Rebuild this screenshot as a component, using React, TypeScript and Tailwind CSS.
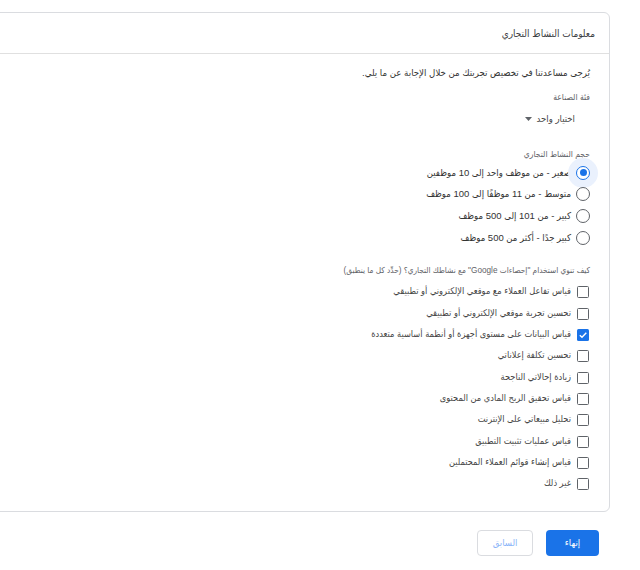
import React from "react";

const radios = [
  "صغير - من موظف واحد إلى 10 موظفين",
  "متوسط - من 11 موظفًا إلى 100 موظف",
  "كبير - من 101 إلى 500 موظف",
  "كبير جدًا - أكثر من 500 موظف",
];

const checks = [
  "قياس تفاعل العملاء مع موقعي الإلكتروني أو تطبيقي",
  "تحسين تجربة موقعي الإلكتروني أو تطبيقي",
  "قياس البيانات على مستوى أجهزة أو أنظمة أساسية متعددة",
  "تحسين تكلفة إعلاناتي",
  "زيادة إحالاتي الناجحة",
  "قياس تحقيق الربح المادي من المحتوى",
  "تحليل مبيعاتي على الإنترنت",
  "قياس عمليات تثبيت التطبيق",
  "قياس إنشاء قوائم العملاء المحتملين",
  "غير ذلك",
];

export default function App() {
  return (
    <div
      dir="rtl"
      className="w-[640px] h-[570px] overflow-hidden bg-white"
      style={{ fontFamily: '"Liberation Sans", "DejaVu Sans Condensed", "DejaVu Sans", Arial, sans-serif' }}
    >
      <div className="mt-[12px] mr-[30px] ml-[-12px] border border-[#dadce0] rounded-[6px] bg-white">
        <div className="h-[41px] flex items-center pr-[14px] border-b border-[#e0e0e0]">
          <span className="text-[10px] text-[#3c4043]">معلومات النشاط التجاري</span>
        </div>
        <div className="pr-[19px] pt-[11px] pb-[16px]">
          <div className="text-[9.6px] leading-[16px] text-[#333333]">
            يُرجى مساعدتنا في تخصيص تجربتك من خلال الإجابة عن ما يلي.
          </div>
          <div className="mt-[10px] text-[8.5px] leading-[12px] text-[#5f6368]">فئة الصناعة</div>
          <div className="mt-[8px] pr-[15px] flex items-center gap-[5px] h-[16px] text-[9.5px] text-[#444444]">
            <span>اختيار واحد</span>
            <svg width="7" height="4" viewBox="0 0 7 4">
              <path d="M0 0 L7 0 L3.5 4 Z" fill="#5f6368" />
            </svg>
          </div>
          <div className="mt-[21px] text-[8.5px] leading-[12px] text-[#5f6368]">حجم النشاط التجاري</div>
          <div className="mt-[2px] flex flex-col">
            {radios.map((r, i) => (
              <div key={i} className="h-[21.67px] flex items-center gap-[5px]">
                <div className="relative w-[14px] h-[14px] flex items-center justify-center">
                  {i === 0 && (
                    <div className="absolute w-[30px] h-[30px] rounded-full bg-[#eaf1fd] top-[-8px] left-[-8px]" />
                  )}
                  <div
                    className={
                      i === 0
                        ? "relative w-[14px] h-[14px] rounded-full border-[1.5px] border-[#1a73e8] flex items-center justify-center bg-white"
                        : "relative w-[14px] h-[14px] rounded-full border-[1.5px] border-[#5f6368] bg-white"
                    }
                  >
                    {i === 0 && <div className="w-[7px] h-[7px] rounded-full bg-[#1a73e8]" />}
                  </div>
                </div>
                <span className="text-[9.5px] text-[#333333]">{r}</span>
              </div>
            ))}
          </div>
          <div className="mt-[16px] text-[8.2px] leading-[12px] text-[#5f6368]">
            كيف تنوي استخدام "إحصاءات Google" مع نشاطك التجاري؟ (حدِّد كل ما ينطبق)
          </div>
          <div className="mt-[5px] flex flex-col">
            {checks.map((c, i) => (
              <div key={i} className="h-[21.33px] flex items-center gap-[6px] pr-[1px]">
                {i === 2 ? (
                  <div className="w-[12px] h-[12px] rounded-[1.5px] bg-[#1a73e8] flex items-center justify-center">
                    <svg width="10" height="10" viewBox="0 0 10 10">
                      <path d="M1.8 5.2 L4 7.3 L8.3 2.8" stroke="white" strokeWidth="1.4" fill="none" />
                    </svg>
                  </div>
                ) : (
                  <div className="w-[12px] h-[12px] rounded-[1.5px] border border-[#5f6368] bg-white" />
                )}
                <span className="text-[9.2px] text-[#444444]">{c}</span>
              </div>
            ))}
          </div>
        </div>
      </div>
      <div className="mt-[18px] pr-[41px] flex gap-[13px]">
        <button className="w-[53px] h-[26px] rounded-[4px] bg-[#1a73e8] text-white text-[9.5px]">إنهاء</button>
        <button className="w-[56px] h-[26px] rounded-[4px] border border-[#dadce0] bg-white text-[#8ab4f8] text-[9.5px]">
          السابق
        </button>
      </div>
    </div>
  );
}
